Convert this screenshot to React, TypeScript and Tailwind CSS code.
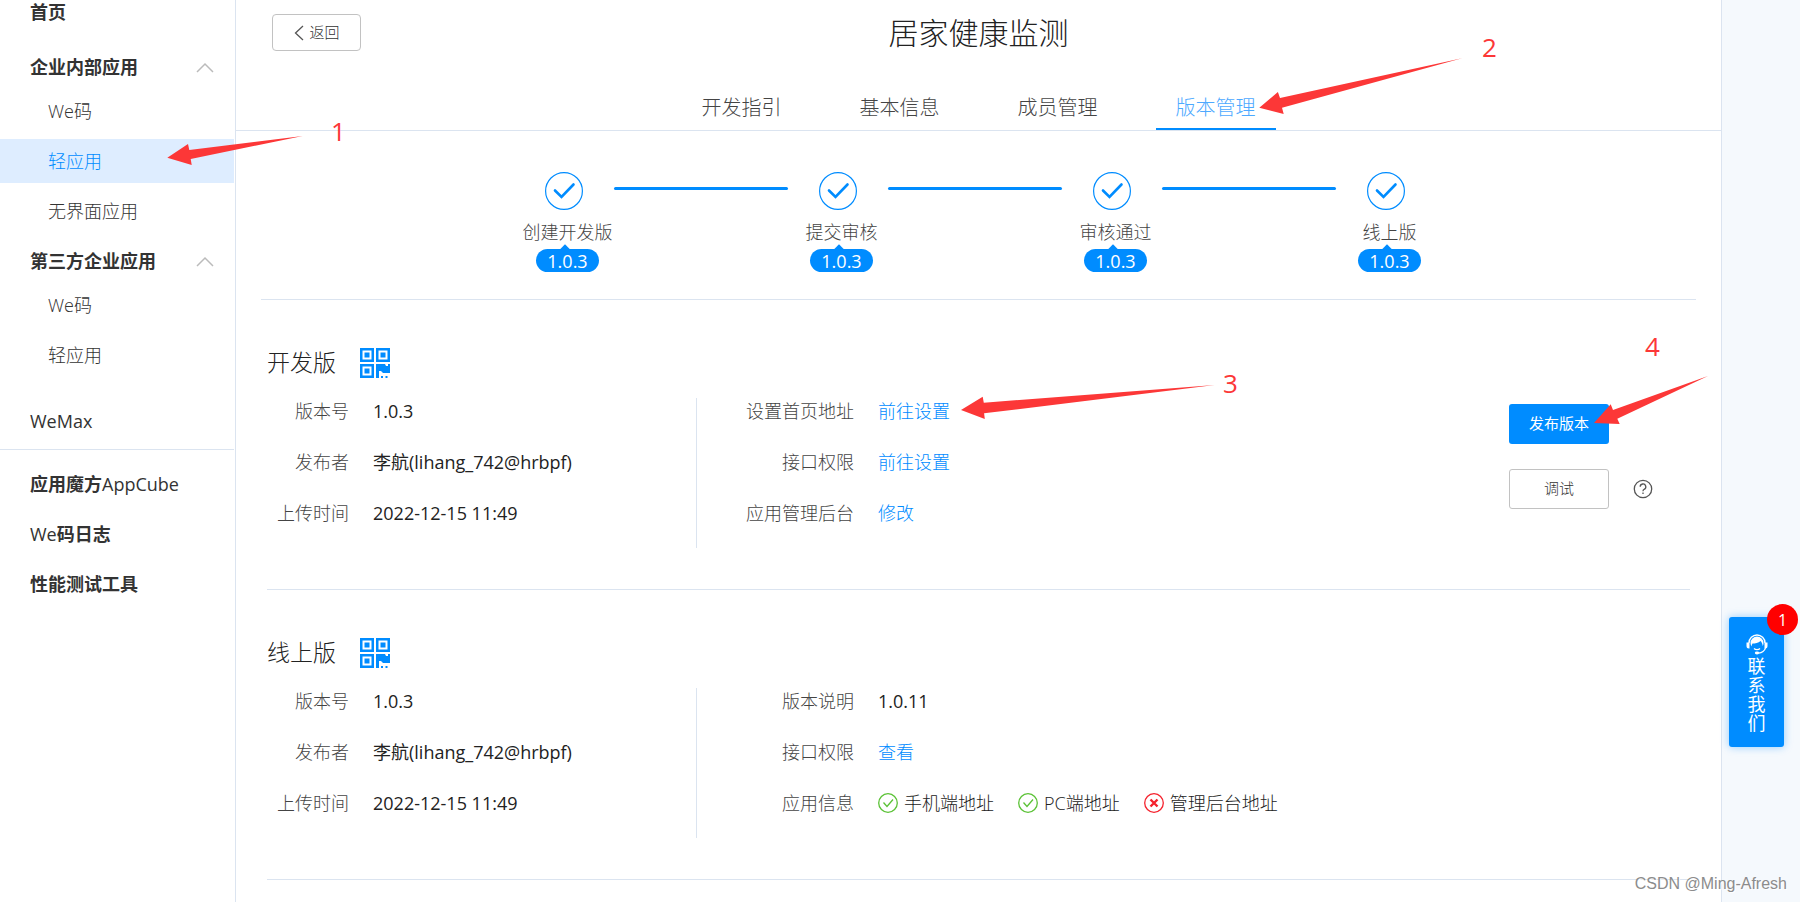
import React from "react";

type NavEntry = { label: string; active?: boolean };

const internalApps: NavEntry[] = [
  { label: "We码" },
  { label: "轻应用", active: true },
  { label: "无界面应用" },
];
const thirdPartyApps: NavEntry[] = [{ label: "We码" }, { label: "轻应用" }];
const tabs = ["开发指引", "基本信息", "成员管理", "版本管理"];
const steps = ["创建开发版", "提交审核", "审核通过", "线上版"];

function NavGroup({ title, items }: { title: string; items: NavEntry[] }) {
  return (
    <section>
      <button type="button" className="flex h-11 w-full items-center justify-between pr-[19px] pl-[30px] font-bold">
        <span>{title}</span>
        <svg className="h-4 w-5" viewBox="0 0 20 16" fill="none" stroke="#bbb" strokeWidth="1.5" aria-hidden="true">
          <path d="M2 13 10 5l8 8" />
        </svg>
      </button>
      <ul className="flex flex-col gap-1.5">
        {items.map((item) => (
          <li key={item.label}>
            <a
              href="#"
              className={
                item.active
                  ? "flex h-11 items-center bg-[#deedff] pl-12 font-light text-[#008cff]"
                  : "flex h-11 items-center pl-12 font-light"
              }
            >
              {item.label}
            </a>
          </li>
        ))}
      </ul>
    </section>
  );
}

function Sidebar() {
  return (
    <aside className="w-[236px] shrink-0 border-r border-[#dbe4f0] bg-white pr-px text-[#333]">
      <nav>
        <a href="#" className="flex h-6 items-center pl-[30px] font-bold">首页</a>
        <div className="mt-[21px]">
          <NavGroup title="企业内部应用" items={internalApps} />
        </div>
        <div className="mt-1.5">
          <NavGroup title="第三方企业应用" items={thirdPartyApps} />
        </div>
        <a href="#" className="mt-[22px] flex h-11 items-center pl-[30px] font-medium">WeMax</a>
        <div className="mt-1.5 flex flex-col gap-1.5 border-t border-[#dbe4f0] pt-3">
          <a href="#" className="flex h-11 items-center pl-[30px]">
            <b>应用魔方</b>AppCube
          </a>
          <a href="#" className="flex h-11 items-center pl-[30px]">
            We<b>码日志</b>
          </a>
          <a href="#" className="flex h-11 items-center pl-[30px] font-bold">性能测试工具</a>
        </div>
      </nav>
    </aside>
  );
}

function Header() {
  return (
    <header className="border-b border-[#dbe4f0]">
      <div className="grid grid-cols-[1fr_auto_1fr] items-start px-9 pt-3.5">
        <button
          type="button"
          className="flex h-[37px] w-[89px] items-center justify-center gap-1 rounded-sm border border-[#c2c2c2] text-[15px] font-light text-[#333]"
        >
          <svg className="h-4 w-3" viewBox="0 0 12 16" fill="none" stroke="#555" strokeWidth="1.3" aria-hidden="true">
            <path d="M10 1 2.500 8l7.500 7" />
          </svg>
          返回
        </button>
        <h1 className="text-[30px] leading-[38px] font-light text-[#222]">居家健康监测</h1>
      </div>
      <div className="mt-[30px] flex justify-center gap-[38px]">
        {tabs.map((tab) => (
          <a
            key={tab}
            href="#"
            className={
              tab === "版本管理"
                ? "flex h-12 items-start justify-center border-b-2 border-[#008cff] px-5 pt-2.5 text-xl leading-8 font-light text-[#4da9ff]"
                : "flex h-12 items-start justify-center border-b-2 border-transparent px-5 pt-2.5 text-xl leading-8 font-light text-[#444]"
            }
          >
            {tab}
          </a>
        ))}
      </div>
    </header>
  );
}

function Steps() {
  return (
    <ol className="mx-[25px] flex h-[169px] justify-center border-b border-[#dbe4f0] pt-[41px]">
      {steps.map((step, i) => (
        <li key={step} className="flex">
          {i > 0 && <span className="mt-[15px] mr-1 -ml-1 h-[3px] w-[174px] rounded-full bg-[#008cff]" />}
          <div className="flex w-[100px] flex-col items-center">
            <svg className="mr-2 h-[38px] w-[38px]" viewBox="0 0 38 38" fill="none" stroke="#008cff" aria-hidden="true">
              <circle cx="19" cy="19" r="18.400" strokeWidth="1.200" />
              <path d="m10 18.500 6.500 6.500L28.500 12.500" strokeWidth="2.600" strokeLinecap="round" />
            </svg>
            <span className="mt-2 text-lg leading-7 font-light whitespace-nowrap text-[#444]">{step}</span>
            <span className="relative mt-[3px] flex h-[23px] w-[63px] items-center justify-center rounded-full bg-[#008cff] text-lg text-white">
              <span className="absolute -top-[3px] left-[25px] h-2 w-2 rotate-45 bg-[#008cff]" />
              <span className="relative leading-none">1.0.3</span>
            </span>
          </div>
        </li>
      ))}
    </ol>
  );
}

function QrIcon() {
  return (
    <svg className="h-[30px] w-[30px]" viewBox="0 0 30 30" fill="#008cff" aria-hidden="true">
      <path fillRule="evenodd" d="M0 0h14v14H0zM2.500 2.500v9h9v-9z" />
      <path fillRule="evenodd" d="M16 0h14v14H16zM18.500 2.500v9h9v-9z" />
      <path fillRule="evenodd" d="M0 16h14v14H0zM2.500 18.500v9h9v-9z" />
      <path d="M4.500 4.500h5v5h-5zM20.500 4.500h5v5h-5zM4.500 20.500h5v5h-5z" />
      <path d="M16 16h9l1 2h2v-2h2v9h-7l-2-2h-2v7h-3zM21 28h2v2h-2zM25.500 28h2v2h-2z" />
    </svg>
  );
}

function Field({ label, children }: { label: string; children: React.ReactNode }) {
  return (
    <>
      <dt className="text-right font-light text-[#444]">{label}</dt>
      <dd className="flex items-center text-[#222]">{children}</dd>
    </>
  );
}

function ActionLink({ children }: { children: React.ReactNode }) {
  return <a href="#" className="font-light text-[#008cff]">{children}</a>;
}

function Status({ ok, children }: { ok: boolean; children: React.ReactNode }) {
  return (
    <span className="flex items-center gap-1.5 font-light">
      <svg className="h-5 w-5" viewBox="0 0 20 20" fill="none" stroke={ok ? "#5bc236" : "#f5222d"} aria-hidden="true">
        <circle cx="10" cy="10" r="9.300" strokeWidth="1.300" />
        {ok ? <path d="m5.500 9.500 3.500 4 6-7" strokeWidth="1.300" /> : <path d="m6.500 6.500 7 7m0-7-7 7" strokeWidth="2.400" />}
      </svg>
      {children}
    </span>
  );
}

function VersionPanel({
  title,
  details,
  actions,
}: {
  title: string;
  details: React.ReactNode;
  actions?: React.ReactNode;
}) {
  return (
    <section className="mx-[31px] flex h-[290px] flex-col border-b border-[#dbe4f0] pt-[47px]">
      <div className="flex h-8 items-center gap-6">
        <h2 className="text-[23px] font-light text-[#222]">{title}</h2>
        <QrIcon />
      </div>
      <div className="mt-[19px] flex text-lg">
        <dl className="grid h-[150px] w-[430px] grid-cols-[82px_1fr] content-start gap-x-6 gap-y-[25px] border-r border-[#dbe4f0] leading-[26px]">
          <Field label="版本号">1.0.3</Field>
          <Field label="发布者">李航(lihang_742@hrbpf)</Field>
          <Field label="上传时间">2022-12-15 11:49</Field>
        </dl>
        <dl className="grid grow grid-cols-[157px_1fr] content-start gap-x-6 gap-y-[25px] leading-[26px]">{details}</dl>
        {actions}
      </div>
    </section>
  );
}

function Actions() {
  return (
    <div className="mt-1.5 mr-[37px] grid grid-cols-[100px_20px] items-center gap-x-6 gap-y-[25px] self-start text-[15px]">
      <button type="button" className="col-start-1 h-10 rounded-[3px] bg-[#008cff] text-white">发布版本</button>
      <button type="button" className="col-start-1 h-10 rounded-[3px] border border-[#c2c2c2] font-light text-[#333]">调试</button>
      <button type="button" aria-label="帮助">
        <svg className="h-5 w-5" viewBox="0 0 20 20" fill="none" stroke="#555" strokeWidth="1.300" aria-hidden="true">
          <circle cx="10" cy="10" r="8.700" />
          <path d="M7.200 7.800a2.800 2.800 0 1 1 4 2.500c-.8.500-1.200.9-1.200 1.900M10 13.600v1.500" />
        </svg>
      </button>
    </div>
  );
}

function ContactWidget() {
  return (
    <button
      type="button"
      className="absolute top-[617px] right-4 flex h-[130px] w-[55px] flex-col items-center rounded-[3px] bg-[#008cff] pt-4 text-lg leading-[19px] text-white shadow-[0_0_8px_rgba(0,140,255,0.4)]"
    >
      <svg className="h-[22px] w-[22px]" viewBox="0 0 22 22" aria-hidden="true">
        <path d="M3 10a8 8 0 0 1 16 0" fill="none" stroke="#fff" strokeWidth="1.400" />
        <path d="M4.500 10a6.500 6.500 0 0 1 13 0c0 1.200-.3 2.200-.8 3.100C16.500 10.500 15.500 9 14.500 8c-2 2-5.500 2.500-8 2.500-.6.700-.9 1.700-.8 3-.8-1-1.200-2.200-1.200-3.500z" fill="#fff" />
        <path d="M.5 9.500h3v6H3a2.500 2.500 0 0 1-2.500-2.500zM18.500 9.500h3V13a2.500 2.500 0 0 1-2.500 2.500h-.5z" fill="#fff" />
        <path d="M19.500 15c-1 3-3.500 4.800-7 5.200M8 15.500c1.500 1.500 4.500 1.500 6 0" fill="none" stroke="#fff" strokeWidth="1.200" />
        <ellipse cx="11" cy="20" rx="2.200" ry="1.400" fill="#fff" />
      </svg>
      <span className="mt-0.5 w-[18px]">联系我们</span>
      <span className="absolute -top-[13px] -right-3.5 flex h-[31px] w-[31px] items-center justify-center rounded-full bg-[#f00] text-base">
        1
      </span>
    </button>
  );
}

function Annotations() {
  return (
    <div className="pointer-events-none absolute inset-0 overflow-hidden text-[26px] leading-8 text-[#fc3737]">
      <svg className="absolute top-0 left-0 h-[902px] w-[1800px]" viewBox="0 0 1800 902" fill="#fc3737" aria-hidden="true">
        <path d="M167.300 157.700 188 144l1.300 6L302.700 136 190.700 159l1 6z" />
        <path d="M1259.300 107.700 1277.900 92l2.100 6L1462 58.300 1282 107.700l1.700 6.300z" />
        <path d="M961 410 982.700 396.700l1.100 6L1214.800 385 984.100 413.300l.7 5.700z" />
        <path d="M1594 423 1610.700 404.300l2.300 5.700L1708 376 1617.300 418.700l2.400 5.300z" />
      </svg>
      <span className="absolute top-[115px] left-[331px]">1</span>
      <span className="absolute top-[31px] left-[1482px]">2</span>
      <span className="absolute top-[367px] left-[1223px]">3</span>
      <span className="absolute top-[330px] left-[1645px]">4</span>
    </div>
  );
}

export default function App() {
  return (
    <div className="relative flex min-h-screen overflow-hidden bg-[#f5f9fd] font-['Open_Sans','Noto_Sans_CJK_SC',sans-serif] text-lg">
      <Sidebar />
      <main className="min-w-0 grow border-r border-[#dbe4f0] bg-white">
        <Header />
        <Steps />
        <VersionPanel
          title="开发版"
          details={
            <>
              <Field label="设置首页地址"><ActionLink>前往设置</ActionLink></Field>
              <Field label="接口权限"><ActionLink>前往设置</ActionLink></Field>
              <Field label="应用管理后台"><ActionLink>修改</ActionLink></Field>
            </>
          }
          actions={<Actions />}
        />
        <VersionPanel
          title="线上版"
          details={
            <>
              <Field label="版本说明">1.0.11</Field>
              <Field label="接口权限"><ActionLink>查看</ActionLink></Field>
              <Field label="应用信息">
                <span className="flex gap-6">
                  <Status ok>手机端地址</Status>
                  <Status ok>PC端地址</Status>
                  <Status ok={false}>管理后台地址</Status>
                </span>
              </Field>
            </>
          }
        />
      </main>
      <div className="w-[78px] shrink-0" />
      <ContactWidget />
      <Annotations />
      <p className="absolute top-[872px] right-[13px] font-['Liberation_Sans',sans-serif] text-base leading-6 text-[#8c8c8c] [text-shadow:1px_1px_0_#fff]">
        CSDN @Ming-Afresh
      </p>
    </div>
  );
}
